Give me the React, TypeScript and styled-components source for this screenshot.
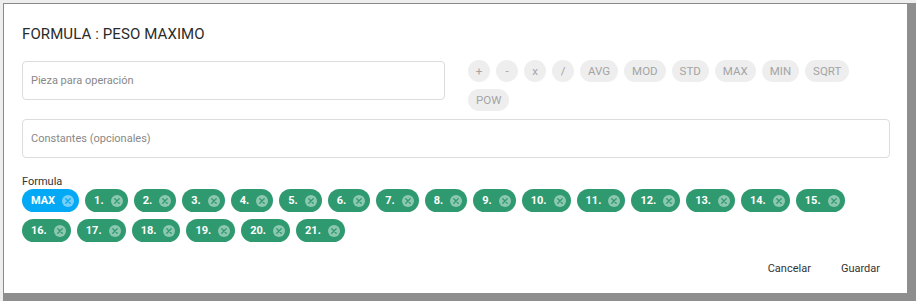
import React from "react";
import styled, { createGlobalStyle } from "styled-components";

const Global = createGlobalStyle`
  html, body { margin: 0; padding: 0; }
  body { font-family: Roboto, "Noto Sans", Arial, sans-serif; background: #8e8e8e; }
  * { box-sizing: border-box; }
`;

const Page = styled.div`
  width: 916px;
  height: 301px;
  overflow: hidden;
  background: #8e8e8e;
  border-top: 3px solid #eeeeee;
  border-left: 3px solid #eeeeee;
  padding: 0 9px 8px 0;
  display: flex;
`;

const Dialog = styled.div`
  flex: 1;
  background: #ffffff;
  border-top: 1px solid #8a8a8a;
  border-left: 1px solid #8a8a8a;
  padding: 20px 17px 10px 18px;
  display: flex;
  flex-direction: column;
`;

const Title = styled.h2`
  margin: 0 0 17px 0;
  font-size: 15px;
  font-weight: 400;
  color: #2b2b2b;
  letter-spacing: 0.1px;
  line-height: 20px;
`;

const TopRow = styled.div`
  display: flex;
  align-items: flex-start;
  gap: 23px;
`;

const Field = styled.div<{ $grow?: boolean }>`
  height: 39px;
  border: 1px solid #dcdcdc;
  border-radius: 4px;
  display: flex;
  align-items: center;
  padding: 0 8px;
  font-size: 11px;
  color: #888888;
  ${(p) => (p.$grow ? "flex: 1;" : "width: 423px; flex: none;")}
`;

const Ops = styled.div`
  flex: 1;
  display: flex;
  flex-wrap: wrap;
  gap: 7px 6px;
  margin-top: -1px;
`;

const Op = styled.span<{ $round?: boolean }>`
  height: 22px;
  padding: ${(p) => (p.$round ? "0" : "0 8px")};
  width: ${(p) => (p.$round ? "22px" : "auto")};
  border-radius: 11px;
  background: #eeeeee;
  color: #a4a4a4;
  font-size: 11.5px;
  display: inline-flex;
  align-items: center;
  justify-content: center;
`;

const SecondField = styled.div`
  margin-top: 8px;
  display: flex;
`;

const Label = styled.div`
  margin-top: 17px;
  font-size: 11px;
  color: #333333;
  line-height: 14px;
`;

const Chips = styled.div`
  margin-top: 0;
  display: flex;
  flex-wrap: wrap;
  gap: 7px 6px;
`;

const Chip = styled.span<{ $color: string }>`
  height: 23px;
  border-radius: 12px;
  background: ${(p) => p.$color};
  color: #ffffff;
  font-size: 11px;
  font-weight: 700;
  display: inline-flex;
  align-items: center;
  gap: 7px;
  padding: 0 5px 0 9px;
`;

const Footer = styled.div`
  margin-top: auto;
  display: flex;
  justify-content: flex-end;
  gap: 10px;
`;

const Btn = styled.button`
  border: none;
  background: transparent;
  font-family: Roboto, Arial, sans-serif;
  font-size: 11px;
  color: #333333;
  height: 30px;
  padding: 0 10px;
`;

const Close = ({ color }: { color: string }) => (
  <svg width="12" height="12" viewBox="0 0 12 12">
    <circle cx="6" cy="6" r="6" fill="rgba(255,255,255,0.45)" />
    <path d="M3.8 3.8 L8.2 8.2 M8.2 3.8 L3.8 8.2" stroke={color} strokeWidth="1.3" strokeLinecap="round" />
  </svg>
);

const ops = ["+", "-", "x", "/", "AVG", "MOD", "STD", "MAX", "MIN", "SQRT", "POW"];
const GREEN = "#2f9a70";
const BLUE = "#03a9f4";

export default function App() {
  const nums = Array.from({ length: 21 }, (_, i) => `${i + 1}.`);
  return (
    <>
      <Global />
      <Page>
        <Dialog>
          <Title>FORMULA : PESO MAXIMO</Title>
          <TopRow>
            <Field>Pieza para operación</Field>
            <Ops>
              {ops.map((o) => (
                <Op key={o} $round={o.length === 1}>
                  {o}
                </Op>
              ))}
            </Ops>
          </TopRow>
          <SecondField>
            <Field $grow>Constantes (opcionales)</Field>
          </SecondField>
          <Label>Formula</Label>
          <Chips>
            <Chip $color={BLUE}>
              MAX
              <Close color={BLUE} />
            </Chip>
            {nums.map((n) => (
              <Chip key={n} $color={GREEN}>
                {n}
                <Close color={GREEN} />
              </Chip>
            ))}
          </Chips>
          <Footer>
            <Btn>Cancelar</Btn>
            <Btn>Guardar</Btn>
          </Footer>
        </Dialog>
      </Page>
    </>
  );
}
